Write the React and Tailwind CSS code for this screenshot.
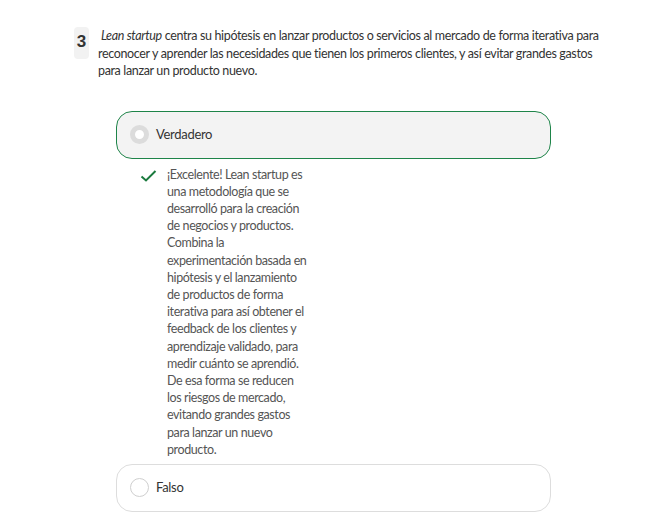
import React from "react";

export default function App() {
  return (
    <div className="w-[647px] h-[531px] bg-white overflow-hidden" style={{ fontFamily: "Lato, 'Noto Sans', sans-serif" }}>
      <div className="flex pl-[74px] pt-[27px]">
        <div className="w-[15px] h-[32px] bg-[#f2f2f2] rounded-[4px] flex items-start justify-center pt-[6px]">
          <span className="text-[17px] font-bold text-[#333] leading-none" style={{ fontFamily: "'Liberation Sans', Arial, sans-serif" }}>3</span>
        </div>
        <p className="ml-[9px] w-[512px] text-[12.5px] tracking-[-0.35px] leading-[17.5px] text-[#333]">
          <span className="pl-[3px]" /><em>Lean startup</em> centra su hipótesis en lanzar productos o servicios al mercado de forma iterativa para reconocer y aprender las necesidades que tienen los primeros clientes, y así evitar grandes gastos para lanzar un producto nuevo.
        </p>
      </div>

      <div className="ml-[116px] mt-[31px] w-[435px]">
        <div className="h-[48px] rounded-[16px] border border-[#1e8449] bg-[#f3f3f3] flex items-center pl-[13px]">
          <div className="w-[19px] h-[19px] rounded-full border-[5px] border-[#dcdcdc] bg-white" />
          <span className="ml-[7px] text-[13px] tracking-[-0.3px] text-[#333]">Verdadero</span>
        </div>

        <div className="flex mt-[7px] pl-[24px]">
          <svg width="17" height="14" viewBox="0 0 17 14" className="mt-[3px] shrink-0">
            <path d="M1.5 7.5 L6 11.5 L15.5 2" fill="none" stroke="#1b7a3e" strokeWidth="2" />
          </svg>
          <p className="ml-[10px] w-[142px] text-[12.5px] tracking-[-0.4px] leading-[17.2px] text-[#555]">
            ¡Excelente! Lean startup es una metodología que se desarrolló para la creación de negocios y productos. Combina la experimentación basada en hipótesis y el lanzamiento de productos de forma iterativa para así obtener el feedback de los clientes y aprendizaje validado, para medir cuánto se aprendió. De esa forma se reducen los riesgos de mercado, evitando grandes gastos para lanzar un nuevo producto.
          </p>
        </div>

        <div className="mt-[6px] h-[48px] rounded-[16px] border border-[#dddddd] bg-white flex items-center pl-[13px]">
          <div className="w-[19px] h-[19px] rounded-full border border-[#cfcfcf] bg-white" />
          <span className="ml-[7px] text-[13px] tracking-[-0.3px] text-[#333]">Falso</span>
        </div>
      </div>
    </div>
  );
}
